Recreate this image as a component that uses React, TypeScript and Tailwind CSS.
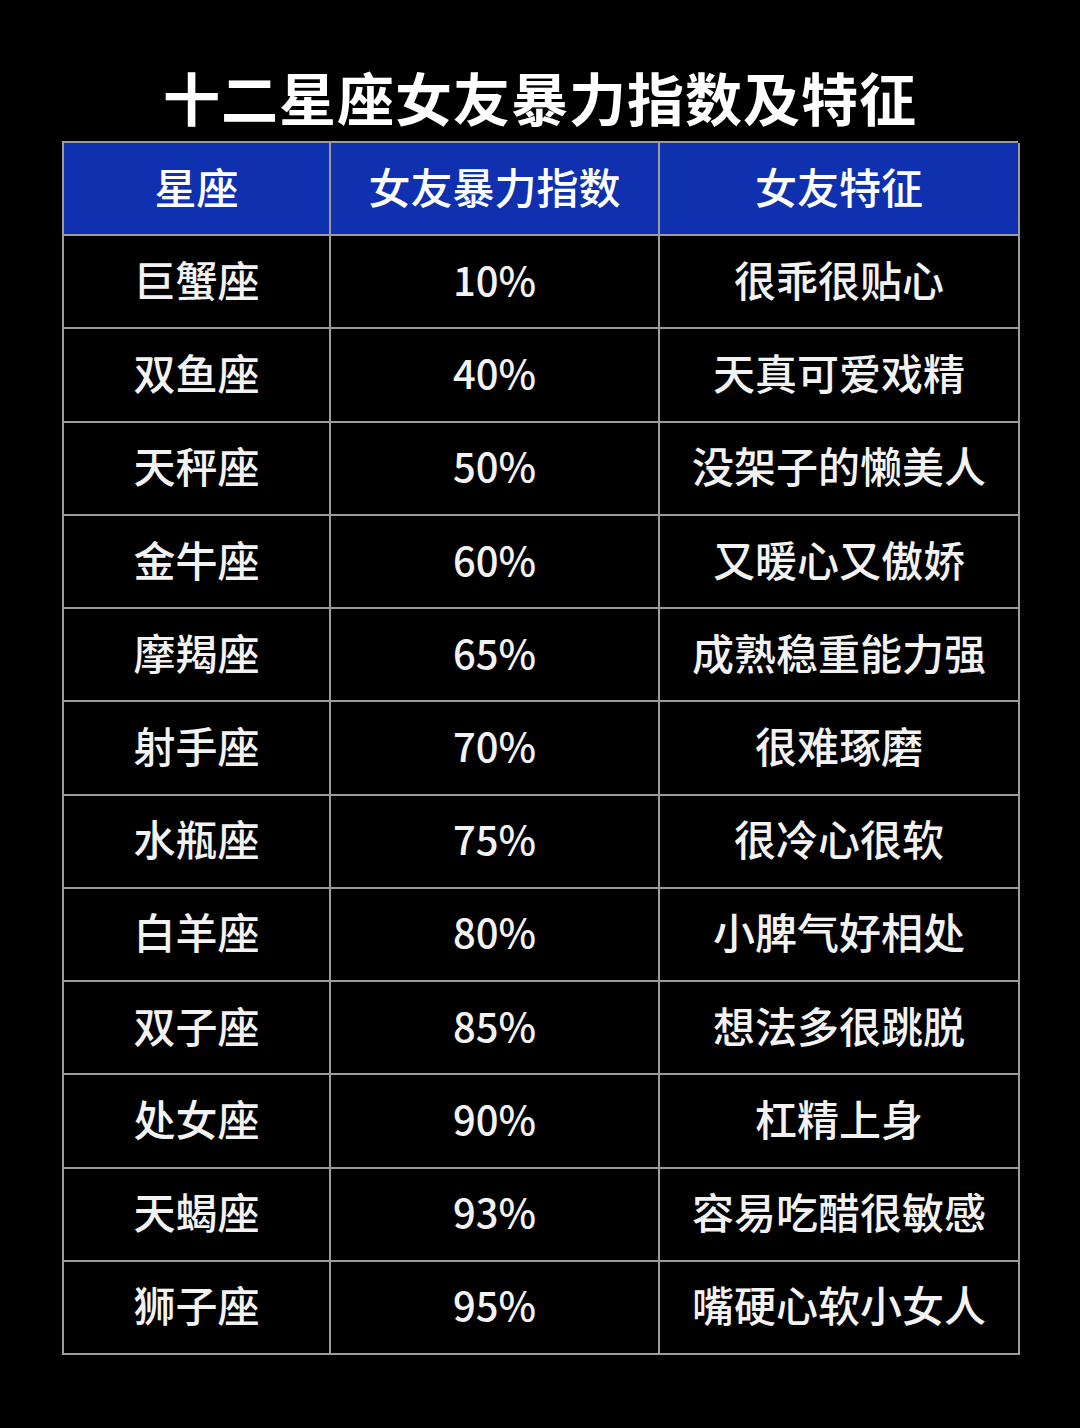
const rows = [
  ["巨蟹座", "10%", "很乖很贴心"],
  ["双鱼座", "40%", "天真可爱戏精"],
  ["天秤座", "50%", "没架子的懒美人"],
  ["金牛座", "60%", "又暖心又傲娇"],
  ["摩羯座", "65%", "成熟稳重能力强"],
  ["射手座", "70%", "很难琢磨"],
  ["水瓶座", "75%", "很冷心很软"],
  ["白羊座", "80%", "小脾气好相处"],
  ["双子座", "85%", "想法多很跳脱"],
  ["处女座", "90%", "杠精上身"],
  ["天蝎座", "93%", "容易吃醋很敏感"],
  ["狮子座", "95%", "嘴硬心软小女人"],
];

const headers = ["星座", "女友暴力指数", "女友特征"];

const cell =
  "flex items-center justify-center pb-[6px] border-r-2 border-b-2 border-[#9c9c9c] leading-none";

export default function App() {
  return (
    <div
      className="w-[1080px] h-[1428px] bg-black flex flex-col items-center text-[#f2f2f2]"
      style={{ fontFamily: '"Noto Sans CJK SC", "Noto Sans", sans-serif' }}
    >
      <h1 className="mt-[68px] mb-[17px] text-[57px] leading-[56px] font-bold tracking-[1px] text-white">
        十二星座女友暴力指数及特征
      </h1>

      <div className="w-[956px] h-[1214px] grid grid-cols-[267px_329px_360px] grid-rows-[repeat(13,1fr)] border-l-2 border-t-2 border-[#9c9c9c]">
        {headers.map((h) => (
          <div key={h} className={`${cell} text-[42px] bg-[#0f31b0] font-medium text-white`}>
            {h}
          </div>
        ))}
        {rows.map((r) =>
          r.map((v, i) => (
            <div
              key={r[0] + i}
              className={`${cell} font-medium ${i === 1 ? "text-[40px]" : "text-[42px]"}`}
            >
              {v}
            </div>
          ))
        )}
      </div>
    </div>
  );
}
